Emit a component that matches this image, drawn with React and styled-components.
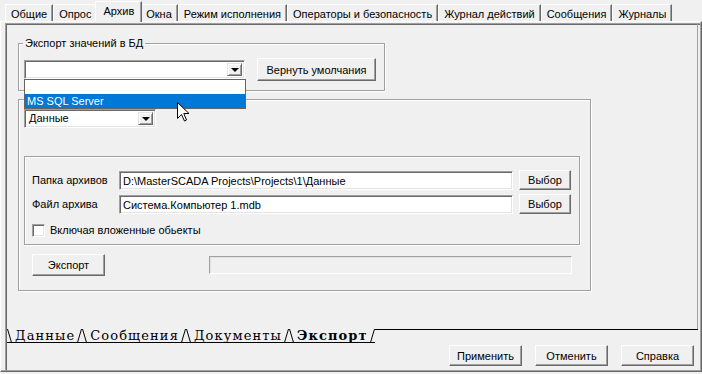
import React from 'react';
import styled, { createGlobalStyle } from 'styled-components';

const GlobalStyle = createGlobalStyle`
  html, body { margin: 0; padding: 0; background: #f0f0f0; }
  body {
    font-family: "Liberation Sans", Arial, sans-serif;
    font-size: 11px;
    color: #000;
  }
  * { box-sizing: border-box; }
`;

const Window = styled.div`
  width: 702px;
  height: 374px;
  background: #f0f0f0;
  display: flex;
  flex-direction: column;
  overflow: hidden;
`;

const TabStrip = styled.div`
  display: flex;
  align-items: flex-end;
  height: 21px;
  padding-left: 5px;
`;

const TopTab = styled.div`
  position: relative;
  z-index: ${({ $active }) => ($active ? 2 : 1)};
  height: ${({ $active }) => ($active ? '21px' : '17px')};
  margin: 0 ${({ $active }) => ($active ? '-2px' : '0')} ${({ $active }) => ($active ? '-1px' : '0')};
  padding: 3px ${({ $active }) => ($active ? '7px' : '5px')} 0;
  line-height: 13px;
  white-space: nowrap;
  background: #f0f0f0;
  border-top: 1px solid #fff;
  border-left: 1px solid #fff;
  border-right: 1px solid #696969;
  box-shadow: inset -1px 0 #a0a0a0;
`;

const TabBody = styled.div`
  flex: 1;
  display: flex;
  margin-bottom: 2px;
  padding: 1px 1px 1px 4px;
  border-top: 1px solid #fff;
  border-left: 1px solid #fff;
  border-right: 1px solid #696969;
  border-bottom: 1px solid #696969;
  box-shadow: inset -1px -1px #a0a0a0;
`;

const Sunken = styled.div`
  flex: 1;
  display: flex;
  flex-direction: column;
  border-top: 1px solid #a0a0a0;
  border-left: 1px solid #a0a0a0;
  box-shadow: inset 1px 1px #696969;
`;

const Sheet = styled.div`
  flex: 1;
  margin-right: 2px;
  padding: 13px 0 0 12px;
  border-right: 1px solid #a0a0a0;
  display: flex;
  flex-direction: column;
  align-items: flex-start;
`;

const Group = styled.fieldset`
  margin: ${({ $mt }) => $mt || 0}px 0 0;
  padding: 0 0 0 ${({ $pl }) => $pl || 0}px;
  min-width: 0;
  width: ${({ $w }) => $w}px;
  height: ${({ $h }) => $h}px;
  border: 1px solid #a0a0a0;
  box-shadow: inset 1px 1px #fff, 1px 1px #fff;
  display: flex;
  flex-direction: column;
  align-items: flex-start;
`;

const Legend = styled.legend`
  margin-left: -1px;
  padding: 0 2px;
  line-height: 13px;
`;

const Row = styled.div`
  display: flex;
  align-items: center;
  gap: ${({ $gap }) => $gap || 0}px;
  margin-top: ${({ $mt }) => $mt || 0}px;
  padding-left: ${({ $pl }) => $pl || 0}px;
`;

const ComboWrap = styled.div`
  position: relative;
`;

const Combo = styled.div`
  width: ${({ $w }) => $w}px;
  height: 19px;
  display: flex;
  align-items: stretch;
  background: #fff;
  border: 1px solid;
  border-color: #a0a0a0 #fff #fff #a0a0a0;
  box-shadow: inset 1px 1px #696969, inset -1px -1px #e3e3e3;
  padding: 2px 2px 2px 3px;
`;

const ComboText = styled.div`
  flex: 1;
  line-height: 13px;
  padding-left: 1px;
`;

const DropButton = styled.div`
  width: 15px;
  display: flex;
  align-items: center;
  justify-content: center;
  background: #f0f0f0;
  border: 1px solid;
  border-color: #e3e3e3 #696969 #696969 #e3e3e3;
  box-shadow: inset 1px 1px #fff, inset -1px -1px #a0a0a0;
  &::after {
    content: '';
    border-left: 4px solid transparent;
    border-right: 4px solid transparent;
    border-top: 4px solid #000;
    margin-top: 1px;
  }
`;

const DropList = styled.div`
  position: absolute;
  left: 0;
  top: 100%;
  z-index: 5;
  width: 222px;
  background: #fff;
  border: 1px solid #646464;
`;

const DropItem = styled.div`
  height: 14px;
  line-height: 14px;
  padding-left: 2px;
  background: ${({ $selected }) => ($selected ? '#0078d7' : '#fff')};
  color: ${({ $selected }) => ($selected ? '#fff' : '#000')};
`;

const Cursor = styled.svg`
  position: absolute;
  left: 153px;
  top: 42px;
  z-index: 6;
`;

const Button = styled.div`
  width: ${({ $w }) => $w}px;
  height: ${({ $h }) => $h || 21}px;
  margin-left: ${({ $ml }) => $ml || 0}px;
  display: flex;
  align-items: center;
  justify-content: center;
  white-space: nowrap;
  background: #f0f0f0;
  border: 1px solid;
  border-color: #fff #696969 #696969 #fff;
  box-shadow: inset -1px -1px #a0a0a0, inset 1px 1px #f0f0f0;
`;

const Label = styled.div`
  width: ${({ $w }) => ($w ? `${$w}px` : 'auto')};
  line-height: 13px;
`;

const Input = styled.div`
  width: ${({ $w }) => $w}px;
  height: 19px;
  background: #fff;
  border: 1px solid;
  border-color: #a0a0a0 #fff #fff #a0a0a0;
  box-shadow: inset 1px 1px #696969, inset -1px -1px #e3e3e3;
  padding: 2px 2px 0 3px;
  line-height: 14px;
  white-space: nowrap;
  overflow: hidden;
`;

const CheckBox = styled.div`
  width: 13px;
  height: 13px;
  background: #fff;
  border: 1px solid;
  border-color: #a0a0a0 #fff #fff #a0a0a0;
  box-shadow: inset 1px 1px #696969, inset -1px -1px #e3e3e3;
`;

const Progress = styled.div`
  width: 363px;
  height: 18px;
  border: 1px solid;
  border-color: #a0a0a0 #fff #fff #a0a0a0;
  box-shadow: inset 1px 1px #e3e3e3;
`;

const SheetTabBar = styled.div`
  height: 14px;
  margin-right: 2px;
  display: flex;
  align-items: stretch;
  font-family: "DejaVu Serif", "Liberation Serif", serif;
  font-size: 13px;
  letter-spacing: 1.1px;
`;

const SheetTab = styled.div`
  display: flex;
  align-items: stretch;
  &:first-child { margin-left: 1px; }
`;

const SheetTabLabel = styled.div`
  padding: 0 2px 0 3px;
  line-height: 13px;
  border-bottom: 1px solid #000;
  font-weight: ${({ $active }) => ($active ? 700 : 400)};
  white-space: nowrap;
`;

const SheetFill = styled.div`
  flex: 1;
  border-top: 1px solid #000;
`;

const ButtonRow = styled.div`
  height: 27px;
  display: flex;
  justify-content: flex-end;
  gap: 13px;
  padding: 2px 6px 0 0;
`;

const Slant = ({ dir }) => (
  <svg width="5" height="14" viewBox="0 0 5 14" style={{ display: 'block' }}>
    <path
      d={dir === 'left' ? 'M0.5 0 L4.5 13.5' : 'M0.5 13.5 L4.5 0'}
      stroke="#000"
      strokeWidth="1"
      fill="none"
    />
    <path d="M0 13.5 H5" stroke="#000" strokeWidth="1" />
  </svg>
);

const topTabs = [
  'Общие',
  'Опрос',
  'Архив',
  'Окна',
  'Режим исполнения',
  'Операторы и безопасность',
  'Журнал действий',
  'Сообщения',
  'Журналы',
];

const sheetTabs = ['Данные', 'Сообщения', 'Документы', 'Экспорт'];

export default function App() {
  return (
    <>
      <GlobalStyle />
      <Window>
        <TabStrip>
          {topTabs.map((t) => (
            <TopTab key={t} $active={t === 'Архив'}>
              {t}
            </TopTab>
          ))}
        </TabStrip>
        <TabBody>
          <Sunken>
            <Sheet>
              <Group $w={367} $h={54} $pl={5}>
                <Legend>Экспорт значений в БД</Legend>
                <Row $gap={12} $mt={8}>
                  <ComboWrap>
                    <Combo $w={221}>
                      <ComboText />
                      <DropButton />
                    </Combo>
                    <DropList>
                      <DropItem />
                      <DropItem $selected>MS SQL Server</DropItem>
                    </DropList>
                    <Cursor width="13" height="20" viewBox="0 0 13 20">
                      <path
                        d="M0.5 0.5 L0.5 16.5 L4.5 12.5 L7.5 19 L9.5 18 L6.8 11.5 L12 11.5 Z"
                        fill="#fff"
                        stroke="#000"
                        strokeWidth="1"
                      />
                    </Cursor>
                  </ComboWrap>
                  <Button $w={119} $h={23}>Вернуть умолчания</Button>
                </Row>
              </Group>

              <Group $mt={8} $w={573} $h={192} $pl={5}>
                <Row $mt={9}>
                  <Combo $w={132}>
                    <ComboText>Данные</ComboText>
                    <DropButton />
                  </Combo>
                </Row>
                <Group $mt={28} $w={556} $h={89} $pl={7}>
                  <Row $mt={13}>
                    <Label $w={87}>Папка архивов</Label>
                    <Input $w={394}>D:\MasterSCADA Projects\Projects\1\Данные</Input>
                    <Button $w={52} $h={20} $ml={6}>Выбор</Button>
                  </Row>
                  <Row $mt={4}>
                    <Label $w={87}>Файл архива</Label>
                    <Input $w={394}>Система.Компьютер 1.mdb</Input>
                    <Button $w={52} $h={20} $ml={6}>Выбор</Button>
                  </Row>
                  <Row $mt={10} $gap={5}>
                    <CheckBox />
                    <Label>Включая вложенные обьекты</Label>
                  </Row>
                </Group>
                <Row $mt={9} $gap={104} $pl={8}>
                  <Button $w={73} $h={22}>Экспорт</Button>
                  <Progress />
                </Row>
              </Group>
            </Sheet>

            <SheetTabBar>
              {sheetTabs.map((t) => (
                <SheetTab key={t}>
                  <Slant dir="left" />
                  <SheetTabLabel $active={t === 'Экспорт'}>{t}</SheetTabLabel>
                  <Slant dir="right" />
                </SheetTab>
              ))}
              <SheetFill />
            </SheetTabBar>

            <ButtonRow>
              <Button $w={73}>Применить</Button>
              <Button $w={73}>Отменить</Button>
              <Button $w={73}>Справка</Button>
            </ButtonRow>
          </Sunken>
        </TabBody>
      </Window>
    </>
  );
}
